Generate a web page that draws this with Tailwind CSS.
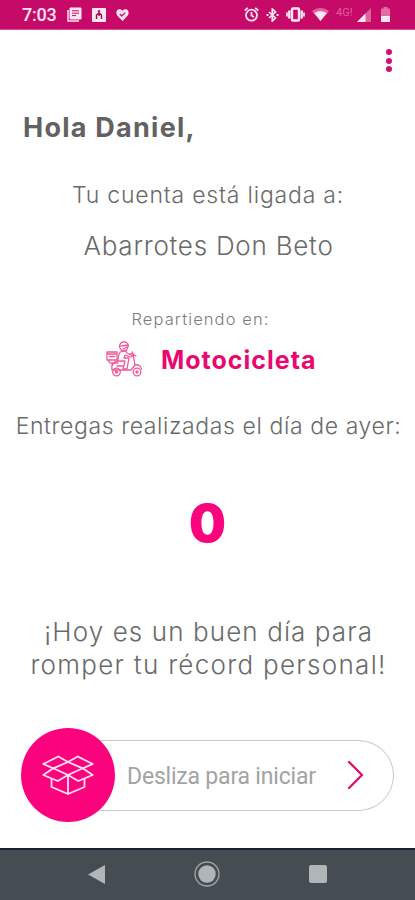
<!DOCTYPE html>
<html lang="es">
<head>
    <meta charset="UTF-8">
    <meta name="viewport" content="width=device-width, initial-scale=1.0">
    <title>Repartidor</title>
    <script src="https://cdn.jsdelivr.net/npm/@tailwindcss/browser@4"></script>
</head>

<body class="bg-white font-['Inter',sans-serif] text-[#6a6a6a]">
    <div class="w-[415px] h-[900px] flex flex-col overflow-hidden">
        <!-- Status bar -->
        <header class="h-[30px] shrink-0 bg-[#c50b67] border-b border-[#e04d94] flex items-center pl-[22px] pr-[25px] text-[#ffe6f2]">
            <span class="font-['Roboto',sans-serif] font-medium text-[18px] leading-none w-[45px] tracking-[-0.2px] pt-[1px]">7:03</span>
            <svg class="w-[15px] h-[15px]" viewBox="0 0 15 15" fill="none" stroke="currentColor">
                <path d="M3 1h11v11H3z" fill="currentColor"/>
                <path d="M1 3v11h11" stroke-width="1.5"/>
                <path d="M5 3.8h7M5 6.2h7M5 8.6h4" stroke="#c50b67"/>
            </svg>
            <svg class="w-[14px] h-[14px] ml-[10px]" viewBox="0 0 14 14">
                <rect width="14" height="14" rx="1" fill="currentColor"/>
                <path d="M4.500 11V7L7 5l2.500 2v4M7 5v3" fill="none" stroke="#8d0a4b" stroke-width="1.4"/>
                <circle cx="7" cy="3.2" r="1.2" fill="#c50b67"/>
            </svg>
            <svg class="w-[13px] h-[12px] ml-[10px]" viewBox="0 0 13 12">
                <path d="M6.500 12L1.200 6.500C-.6 4 .6 0 3.700.3c1.300 0 2.200.7 2.800 1.500C7.100 1 8 .3 9.300.3c3.100-.3 4.300 3.700 2.500 6.200z" fill="currentColor"/>
                <path d="M3.800 5l2 2 3.500-3.400" fill="none" stroke="#c50b67" stroke-width="1.300"/>
            </svg>
            <div class="flex items-center ml-auto">
                <svg class="w-[15px] h-[15px]" viewBox="0 0 15 15" fill="none" stroke="currentColor" stroke-width="1.8">
                    <circle cx="7.500" cy="8.200" r="5.500"/>
                    <path d="M7.500 5v3.500l2.500 1.500M.7 3.500L3.800.9M14.300 3.500L11.200.9"/>
                </svg>
                <svg class="w-[13px] h-[14px] ml-[7px]" viewBox="0 0 13 14" fill="none" stroke="currentColor" stroke-width="1.7">
                    <path d="M3 4l6.500 6-3.200 3V1l3.200 3L3 10"/>
                    <path d="M.5 7h2M10.500 7h2" stroke-width="2"/>
                </svg>
                <svg class="w-[19px] h-[15px] ml-[7px]" viewBox="0 0 19 15" fill="none" stroke="currentColor">
                    <rect x="6" y="1.500" width="7" height="12" rx="1" stroke-width="2.400"/>
                    <path d="M3.300 3.500v8M15.700 3.500v8" stroke-width="2.400"/>
                    <path d="M1 5.500v4M18 5.500v4" stroke-width="1.800"/>
                </svg>
                <svg class="w-[17px] h-[13px] ml-[7px]" viewBox="0 0 17 13" fill="currentColor">
                    <path d="M0 3.200C5 -1 12 -1 17 3.200L8.500 13z" opacity=".4"/>
                    <path d="M2.200 5C6 2.600 11 2.600 14.800 5L8.500 13z"/>
                </svg>
                <span class="font-['Roboto',sans-serif] text-[11px] leading-none text-[#e25d9f] w-[18px] ml-[7px] mb-[5px]">4G!</span>
                <svg class="w-[14px] h-[14px] ml-[3px]" viewBox="0 0 14 14" fill="currentColor">
                    <path d="M14 0v14H0z" opacity=".4"/>
                    <path d="M8.500 5.500V14H0z"/>
                </svg>
                <svg class="w-[9px] h-[15px] ml-[10px]" viewBox="0 0 9 15" fill="currentColor">
                    <path d="M2.500 0h4v1.500H9V15H0V1.500h2.500z" opacity=".45"/>
                    <path d="M0 9h9v6H0z"/>
                </svg>
            </div>
        </header>

        <!-- Content -->
        <main class="flex-1 flex flex-col items-center">
            <button class="self-end mt-[19px] mr-[23px] h-[23px] flex flex-col justify-between items-center" aria-label="Menú">
                <span class="size-[6px] rounded-full bg-[#d90c73]"></span>
                <span class="size-[6px] rounded-full bg-[#d90c73]"></span>
                <span class="size-[6px] rounded-full bg-[#d90c73]"></span>
            </button>

            <h1 class="self-start ml-[23px] mt-[41px] text-[27px] leading-[30px] font-bold tracking-[1.25px] text-[#626262] whitespace-nowrap">Hola Daniel,</h1>
            <p class="mt-[37px] text-[23px] leading-[30px] font-light tracking-[0.8px] whitespace-nowrap pl-[1px]">Tu cuenta está ligada a:</p>
            <p class="mt-[21px] text-[26px] leading-[30px] font-light tracking-[0.75px] whitespace-nowrap pl-[2px]">Abarrotes Don Beto</p>

            <p class="mt-[48px] text-[16.5px] leading-[20px] font-light tracking-[1.1px] whitespace-nowrap pr-[14px] text-[#7c7c7c]">Repartiendo en:</p>
            <div class="mt-[10px] h-[40px] self-start ml-[105px] flex items-center">
                <svg class="w-[38px] h-[36px]" viewBox="0 0 38 36" fill="none" stroke="#f0599c" stroke-width="1.300" stroke-linejoin="round" stroke-linecap="round">
                    <path d="M2 11h10v8H2zM2 13h10M4.500 15.500h5M3 19l2 3h8"/>
                    <path d="M15.500 8a4.500 4.500 0 1 1 8-3.500l-2 5-4 1zM16 5l7-1M18 8l4-2"/>
                    <path d="M17 10c-3 1-4 6-4 10h7l-2 8h4l2-11h-5l1-3 6 2 2-1-6-3-2-3z"/>
                    <path d="M13 20c-5 1-7 4-6 9h19l4-5-2-11h-3M28 13l3 2M28 13l-1-2M12 25h6M30 24c3-1 6 1 6.500 4"/>
                    <circle cx="11.500" cy="31" r="3.800"/><circle cx="32" cy="31" r="3.800"/>
                    <circle cx="11.500" cy="31" r="1"/><circle cx="32" cy="31" r="1"/>
                </svg>
                <span class="ml-[18px] mt-[1px] text-[25px] leading-[30px] font-bold tracking-[1px] text-[#e9086f] whitespace-nowrap">Motocicleta</span>
            </div>

            <p class="mt-[32px] text-[23px] leading-[30px] font-light tracking-[0.6px] whitespace-nowrap pl-[2px]">Entregas realizadas el día de ayer:</p>
            <p class="mt-[53px] text-[52px] leading-[60px] font-black text-[#fb037d]">0</p>

            <div class="mt-[61px] flex flex-col items-center text-[26px] leading-[33px] font-light whitespace-nowrap pl-[2px]">
                <p class="tracking-[1.1px]">¡Hoy es un buen día para</p>
                <p class="tracking-[1.3px]">romper tu récord personal!</p>
            </div>

            <!-- Slide to start -->
            <div class="mt-auto mb-[26px] w-[373px] h-[94px] flex items-center">
                <div class="size-[94px] shrink-0 rounded-full bg-[#fb037d] flex items-center justify-center z-10">
                    <svg class="w-[52px] h-[40px]" viewBox="0 0 52 40" fill="none" stroke="#ffe3f1" stroke-width="1.800" stroke-linejoin="round">
                        <path d="M26 7l-9.700-5.500L1.300 9l10 4.300zM26 7l9.700-5.500 15 7.500-10 4.300z"/>
                        <path d="M11.300 13.300l-10 6.700 14.400 6L26 20zM40.700 13.300l10 6.700-14.400 6L26 20z"/>
                        <path d="M9.500 23.500V32L26 39l16.500-7v-8.500M26 20v19"/>
                    </svg>
                </div>
                <div class="flex-1 h-[71px] -ml-[47px] pl-[59px] pr-[29px] rounded-r-full border border-l-0 border-[#c9c9c9] flex items-center justify-between">
                    <span class="font-['Roboto',sans-serif] text-[23px] leading-[28px] tracking-[-0.2px] pt-[3px] text-[#a3a3a3] whitespace-nowrap">Desliza para iniciar</span>
                    <svg class="w-[17px] h-[30px]" viewBox="0 0 17 30" fill="none" stroke="#e1106f" stroke-width="2.400" stroke-linecap="round" stroke-linejoin="round">
                        <path d="M2 2l13 13L2 28"/>
                    </svg>
                </div>
            </div>
        </main>

        <!-- Navigation bar -->
        <nav class="h-[52px] shrink-0 bg-[#454c52] border-t-2 border-[#182233] flex items-center pl-[88px] pr-[88px] pb-[2px] justify-between">
            <svg class="w-[17px] h-[19px]" viewBox="0 0 17 19"><path d="M0 9.500L17 0v19z" fill="#b0b5b7"/></svg>
            <svg class="size-[26px]" viewBox="0 0 26 26"><circle cx="13" cy="13" r="12" fill="none" stroke="#9ca2a5" stroke-width="1.400"/><circle cx="13" cy="13" r="8.700" fill="#b0b5b7"/></svg>
            <span class="size-[18px] rounded-[2px] bg-[#b0b5b7]"></span>
        </nav>
    </div>
</body>
</html>
